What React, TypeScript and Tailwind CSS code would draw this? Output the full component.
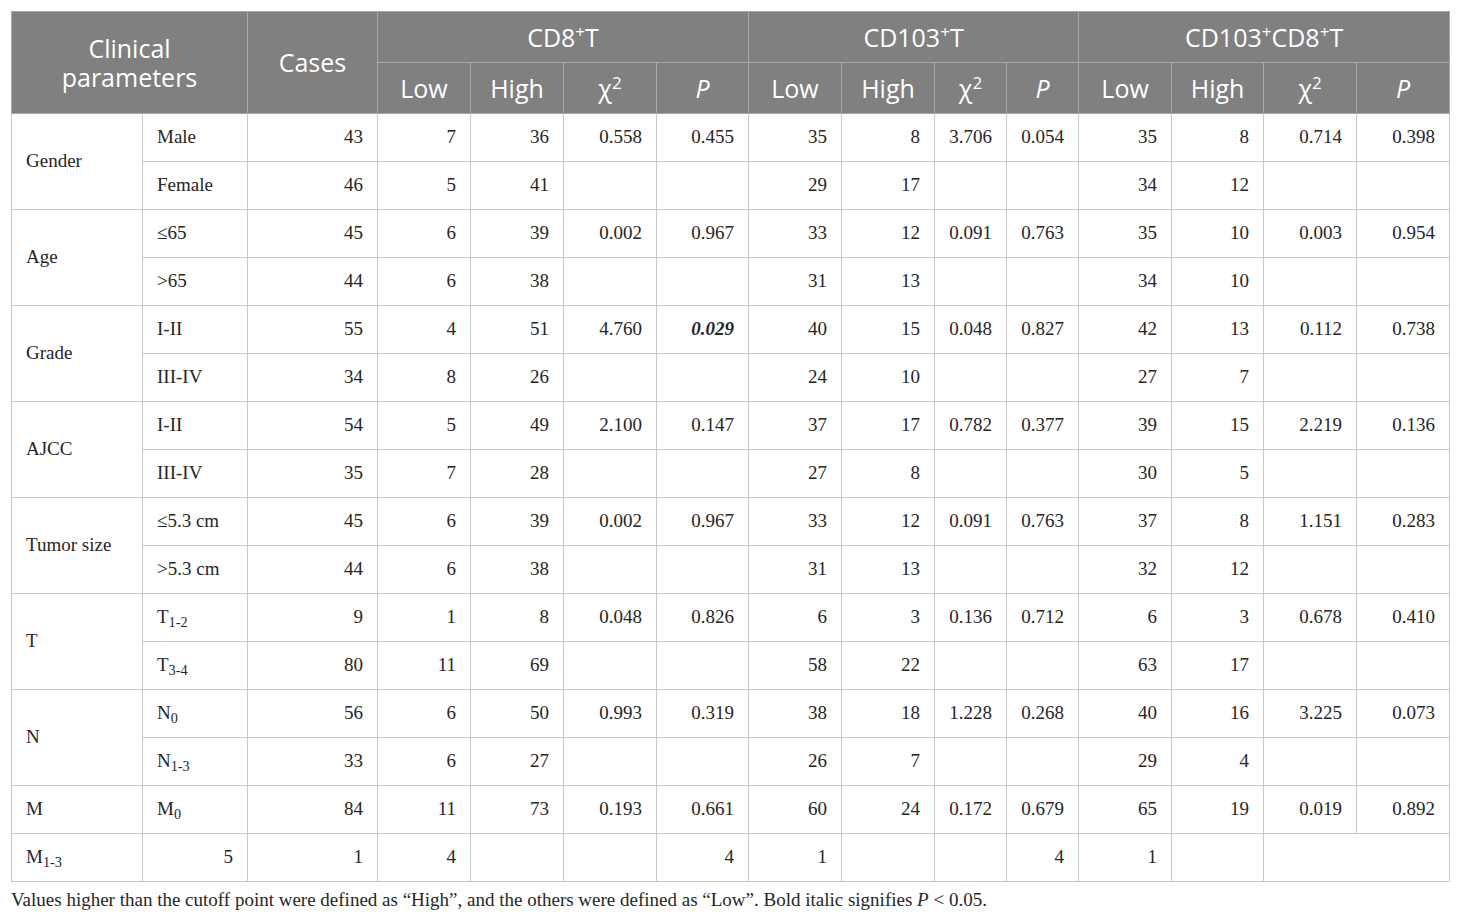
import React from "react";

const serif = { fontFamily: '"Liberation Serif", "Times New Roman", serif' };

const rows: { group?: string; span?: number; sub: React.ReactNode; cells: string[] }[] = [
  { group: "Gender", span: 2, sub: "Male", cells: ["43", "7", "36", "0.558", "0.455", "35", "8", "3.706", "0.054", "35", "8", "0.714", "0.398"] },
  { sub: "Female", cells: ["46", "5", "41", "", "", "29", "17", "", "", "34", "12", "", ""] },
  { group: "Age", span: 2, sub: "≤65", cells: ["45", "6", "39", "0.002", "0.967", "33", "12", "0.091", "0.763", "35", "10", "0.003", "0.954"] },
  { sub: ">65", cells: ["44", "6", "38", "", "", "31", "13", "", "", "34", "10", "", ""] },
  { group: "Grade", span: 2, sub: "I-II", cells: ["55", "4", "51", "4.760", "*0.029", "40", "15", "0.048", "0.827", "42", "13", "0.112", "0.738"] },
  { sub: "III-IV", cells: ["34", "8", "26", "", "", "24", "10", "", "", "27", "7", "", ""] },
  { group: "AJCC", span: 2, sub: "I-II", cells: ["54", "5", "49", "2.100", "0.147", "37", "17", "0.782", "0.377", "39", "15", "2.219", "0.136"] },
  { sub: "III-IV", cells: ["35", "7", "28", "", "", "27", "8", "", "", "30", "5", "", ""] },
  { group: "Tumor size", span: 2, sub: "≤5.3 cm", cells: ["45", "6", "39", "0.002", "0.967", "33", "12", "0.091", "0.763", "37", "8", "1.151", "0.283"] },
  { sub: ">5.3 cm", cells: ["44", "6", "38", "", "", "31", "13", "", "", "32", "12", "", ""] },
  { group: "T", span: 2, sub: <>T<sub>1-2</sub></>, cells: ["9", "1", "8", "0.048", "0.826", "6", "3", "0.136", "0.712", "6", "3", "0.678", "0.410"] },
  { sub: <>T<sub>3-4</sub></>, cells: ["80", "11", "69", "", "", "58", "22", "", "", "63", "17", "", ""] },
  { group: "N", span: 2, sub: <>N<sub>0</sub></>, cells: ["56", "6", "50", "0.993", "0.319", "38", "18", "1.228", "0.268", "40", "16", "3.225", "0.073"] },
  { sub: <>N<sub>1-3</sub></>, cells: ["33", "6", "27", "", "", "26", "7", "", "", "29", "4", "", ""] },
  { group: "M", span: 1, sub: <>M<sub>0</sub></>, cells: ["84", "11", "73", "0.193", "0.661", "60", "24", "0.172", "0.679", "65", "19", "0.019", "0.892"] },
];

const widths = [131, 105, 130, 93, 93, 93, 92, 93, 93, 72, 72, 93, 92, 93, 93];

const td = "border border-[#c8c8c8] px-[14px] whitespace-nowrap text-[19px] text-[#262626] align-middle";
const th = "border border-[#a8a8a8] bg-[#808080] text-white font-normal text-center align-middle text-[25px] leading-[29px] whitespace-nowrap";

function Sup({ children }: { children: React.ReactNode }) {
  return <sup className="text-[17px]">{children}</sup>;
}

export default function App() {
  return (
    <div className="bg-white w-[1460px] h-[921px] pl-[11px] pt-[11px]" style={serif}>
      <table className="table-fixed border-collapse w-[1438px] border border-[#c8c8c8]">
        <colgroup>
          {widths.map((w, i) => (
            <col key={i} style={{ width: w }} />
          ))}
        </colgroup>
        <thead style={{ fontFamily: '"Open Sans", "Noto Sans", sans-serif' }}>
          <tr className="h-[51px]">
            <th colSpan={2} rowSpan={2} className={th}>
              Clinical
              <br />
              parameters
            </th>
            <th rowSpan={2} className={th}>Cases</th>
            <th colSpan={4} className={th}>
              CD8<Sup>+</Sup>T
            </th>
            <th colSpan={4} className={th}>
              CD103<Sup>+</Sup>T
            </th>
            <th colSpan={4} className={th}>
              CD103<Sup>+</Sup>CD8<Sup>+</Sup>T
            </th>
          </tr>
          <tr className="h-[51px]">
            {[0, 1, 2].map((g) => (
              <React.Fragment key={g}>
                <th className={th}>Low</th>
                <th className={th}>High</th>
                <th className={th}>
                  χ<Sup>2</Sup>
                </th>
                <th className={th}>
                  <i>P</i>
                </th>
              </React.Fragment>
            ))}
          </tr>
        </thead>
        <tbody>
          {rows.map((r, i) => (
            <tr key={i} className="h-[48px]">
              {r.group && (
                <td rowSpan={r.span} className={td + " text-left"}>
                  {r.group}
                </td>
              )}
              <td className={td + " text-left"}>{r.sub}</td>
              {r.cells.map((c, j) => {
                const bi = c.startsWith("*");
                return (
                  <td key={j} className={td + " text-right !pl-[2px]"}>
                    {bi ? <b><i>{c.slice(1)}</i></b> : c}
                  </td>
                );
              })}
            </tr>
          ))}
          <tr className="h-[48px]">
            <td className={td + " text-left"}>
              M<sub>1-3</sub>
            </td>
            <td className={td + " text-right"}>5</td>
            <td className={td + " text-right"}>1</td>
            <td className={td + " text-right"}>4</td>
            <td className={td}></td>
            <td className={td}></td>
            <td className={td + " text-right"}>4</td>
            <td className={td + " text-right"}>1</td>
            <td className={td}></td>
            <td className={td}></td>
            <td className={td + " text-right"}>4</td>
            <td className={td + " text-right"}>1</td>
            <td className={td}></td>
            <td colSpan={2} className={td}></td>
          </tr>
        </tbody>
      </table>
      <p className="mt-[6px] text-[19px] leading-[24px] text-[#262626]">
        Values higher than the cutoff point were defined as “High”, and the others were defined as “Low”. Bold italic signifies <i>P</i> &lt; 0.05.
      </p>
    </div>
  );
}
